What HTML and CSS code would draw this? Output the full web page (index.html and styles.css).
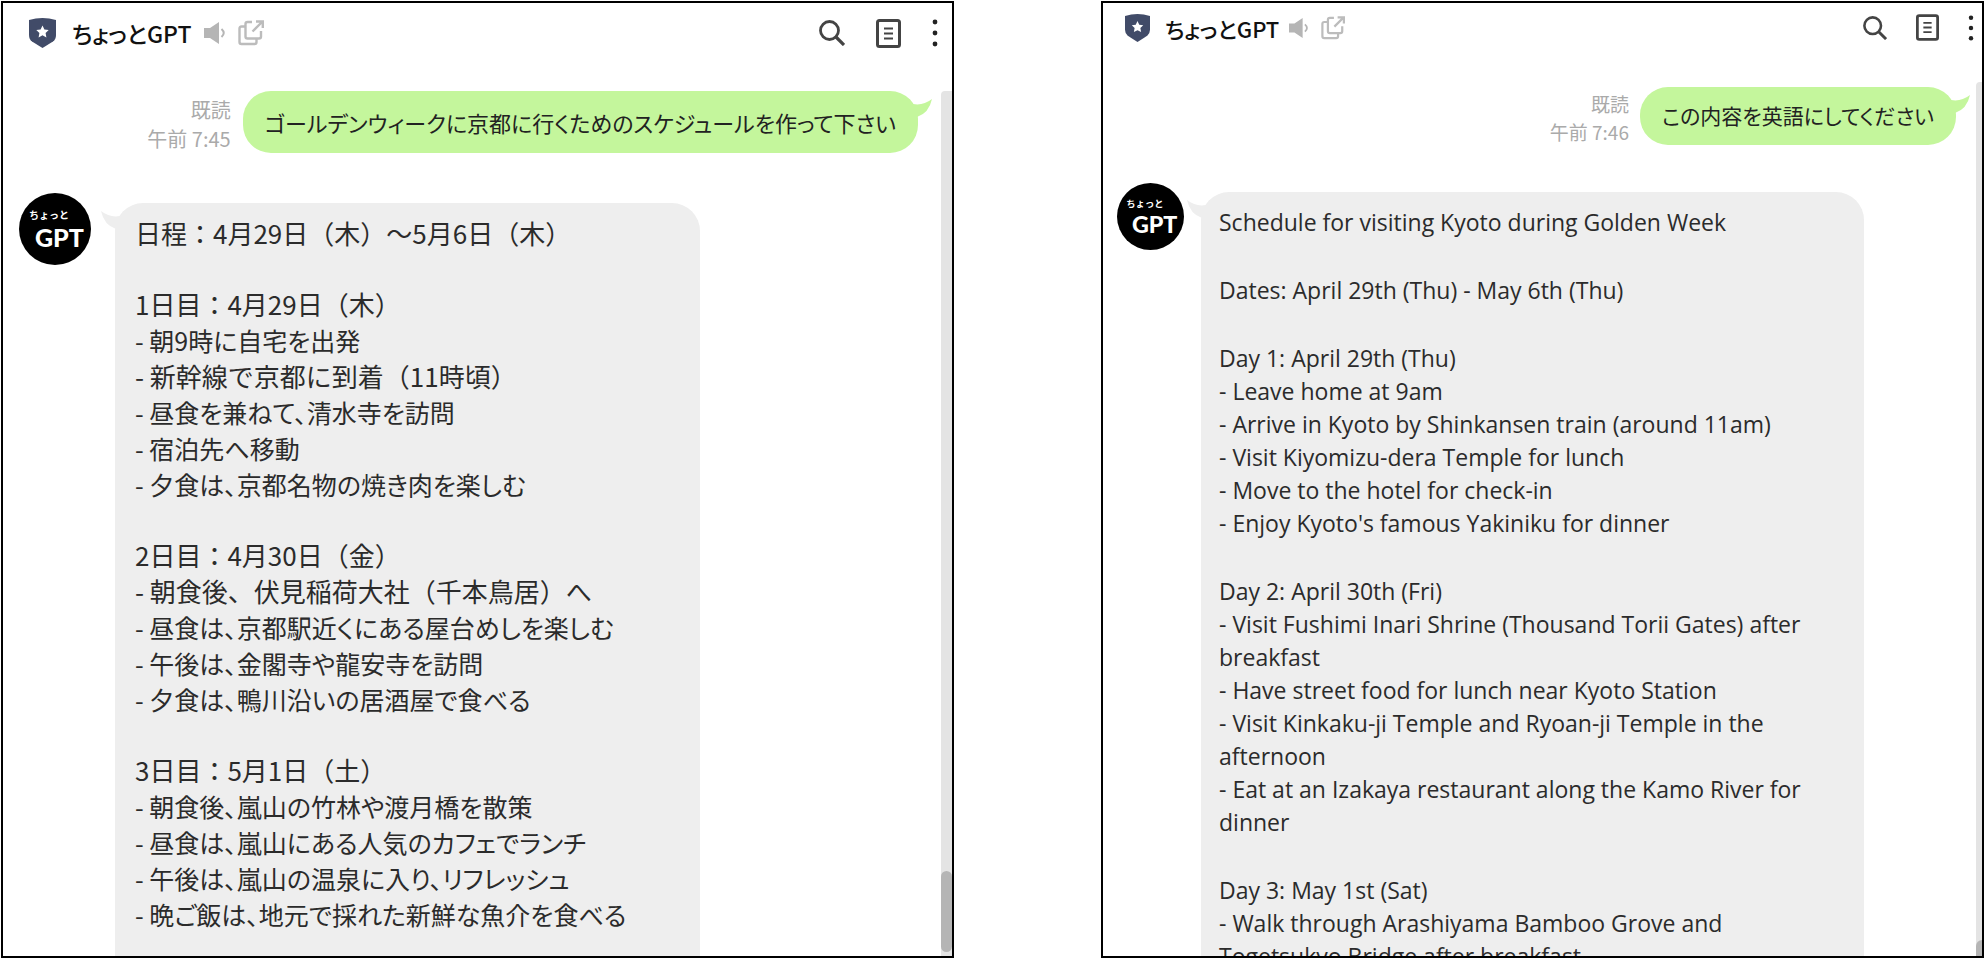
FILE: index.html
```
<!DOCTYPE html>
<html lang="ja">
<head>
  <meta charset="UTF-8">
  <title>ちょっとGPT</title>
  <meta name="viewport" content="width=device-width, initial-scale=1.0">
  <link rel="stylesheet" href="styles.css">
</head>
<body>

  <!-- shared icons -->
  <svg class="sprite" aria-hidden="true">
    <symbol id="shield" viewBox="0 0 27 30">
      <path fill="#414b68" d="M0 2Q13.500-2 27 2V17Q27 21 24 23.500L13.500 30L3 23.500Q0 21 0 17Z"/>
      <path fill="#fff" d="M13.500 7.500l1.900 4 4.300.6-3.100 3 .8 4.300-3.900-2.100-3.900 2.100.8-4.300-3.100-3 4.300-.6z"/>
    </symbol>
    <symbol id="speaker" viewBox="0 0 22 22">
      <path fill="#b5b5b5" d="M0 6H6L15 0V22L6 16H0Z"/>
      <path fill="none" stroke="#b5b5b5" stroke-width="2" d="M17.500 7Q22 11 17.500 15"/>
    </symbol>
    <symbol id="popout" viewBox="0 0 26 26">
      <g fill="none" stroke="#bcbcbc" stroke-width="2.400">
        <path d="M14 2H9.500Q7.500 2 7.500 4V16.500Q7.500 18.500 9.500 18.500H21Q23 18.500 23 16.500V11"/>
        <path d="M7 6.500H3.500Q1.500 6.500 1.500 8.500V22Q1.500 24 3.500 24H16.500Q18.500 24 18.500 22V19"/>
        <path d="M14.500 11.500L24 2M18 1.500H24.800V8"/>
      </g>
    </symbol>
    <symbol id="search" viewBox="0 0 26 26">
      <circle cx="10.500" cy="10.500" r="9" fill="none" stroke="#444" stroke-width="2.800"/>
      <path stroke="#444" stroke-width="3.200" d="M17 17L25 25"/>
    </symbol>
    <symbol id="note" viewBox="0 0 25 29">
      <rect x="1.500" y="1.500" width="22" height="26" rx="2" fill="none" stroke="#444" stroke-width="3"/>
      <path stroke="#444" stroke-width="2" d="M8 9.500H17M8 14.500H17M8 19.500H17"/>
    </symbol>
    <symbol id="dots" viewBox="0 0 6 28">
      <g fill="#222"><circle cx="3" cy="3" r="2.400"/><circle cx="3" cy="14" r="2.400"/><circle cx="3" cy="25" r="2.400"/></g>
    </symbol>
    <symbol id="tail" viewBox="0 0 24 20">
      <path fill="currentColor" d="M0 0L4 5Q14 7 23 0Q20 14 8 18L0 20Z"/>
    </symbol>
  </svg>

  <main class="screens">

    <section class="window">
      <header class="topbar">
        <svg class="shield"><use href="#shield"/></svg>
        <h1 class="title">ちょっとGPT</h1>
        <button class="btn" aria-label="通知"><svg class="speaker"><use href="#speaker"/></svg></button>
        <button class="btn" aria-label="別ウィンドウ"><svg class="popout"><use href="#popout"/></svg></button>
        <div class="tools">
          <button class="btn" aria-label="検索"><svg class="search"><use href="#search"/></svg></button>
          <button class="btn" aria-label="ノート"><svg class="note"><use href="#note"/></svg></button>
          <button class="btn" aria-label="メニュー"><svg class="dots"><use href="#dots"/></svg></button>
        </div>
      </header>
      <div class="chat">
        <div class="messages">
          <div class="row sent">
            <div class="meta">既読<br>午前 7:45</div>
            <div class="bubble green">
              <p class="kana">ゴールデンウィークに京都に行くためのスケジュールを作って下さい</p>
              <svg class="tail"><use href="#tail"/></svg>
            </div>
          </div>
          <div class="row received">
            <svg class="avatar" viewBox="0 0 72 72">
              <circle cx="36" cy="36" r="36"/>
              <text class="avatar-small" x="10" y="26">ちょっと</text>
              <text class="avatar-big" x="16" y="54">GPT</text>
            </svg>
            <div class="bubble gray">
              <svg class="tail"><use href="#tail"/></svg>
              <div class="block">
                <p>日程：4月29日（木）～5月6日（木）</p>
              </div>
              <div class="block">
                <p>1日目：4月29日（木）</p>
                <p class="kana">- 朝9時に自宅を出発</p>
                <p>- 新幹線で京都に到着（11時頃）</p>
                <p class="kana">- 昼食を兼ねて、清水寺を訪問</p>
                <p class="kana">- 宿泊先へ移動</p>
                <p class="kana">- 夕食は、京都名物の焼き肉を楽しむ</p>
              </div>
              <div class="block">
                <p>2日目：4月30日（金）</p>
                <p>- 朝食後、伏見稲荷大社（千本鳥居）へ</p>
                <p class="kana">- 昼食は、京都駅近くにある屋台めしを楽しむ</p>
                <p class="kana">- 午後は、金閣寺や龍安寺を訪問</p>
                <p class="kana">- 夕食は、鴨川沿いの居酒屋で食べる</p>
              </div>
              <div class="block">
                <p>3日目：5月1日（土）</p>
                <p class="kana">- 朝食後、嵐山の竹林や渡月橋を散策</p>
                <p class="kana">- 昼食は、嵐山にある人気のカフェでランチ</p>
                <p class="kana">- 午後は、嵐山の温泉に入り、リフレッシュ</p>
                <p class="kana">- 晩ご飯は、地元で採れた新鮮な魚介を食べる</p>
              </div>
            </div>
          </div>
        </div>
        <div class="scrollbar"><div class="thumb"></div></div>
      </div>
    </section>

    <section class="window small">
      <header class="topbar">
        <svg class="shield"><use href="#shield"/></svg>
        <h1 class="title">ちょっとGPT</h1>
        <button class="btn" aria-label="通知"><svg class="speaker"><use href="#speaker"/></svg></button>
        <button class="btn" aria-label="別ウィンドウ"><svg class="popout"><use href="#popout"/></svg></button>
        <div class="tools">
          <button class="btn" aria-label="検索"><svg class="search"><use href="#search"/></svg></button>
          <button class="btn" aria-label="ノート"><svg class="note"><use href="#note"/></svg></button>
          <button class="btn" aria-label="メニュー"><svg class="dots"><use href="#dots"/></svg></button>
        </div>
      </header>
      <div class="chat">
        <div class="messages">
          <div class="row sent">
            <div class="meta">既読<br>午前 7:46</div>
            <div class="bubble green">
              <p class="kana">この内容を英語にしてください</p>
              <svg class="tail"><use href="#tail"/></svg>
            </div>
          </div>
          <div class="row received">
            <svg class="avatar" viewBox="0 0 72 72">
              <circle cx="36" cy="36" r="36"/>
              <text class="avatar-small" x="10" y="26">ちょっと</text>
              <text class="avatar-big" x="16" y="54">GPT</text>
            </svg>
            <div class="bubble gray" lang="en">
              <svg class="tail"><use href="#tail"/></svg>
              <div class="block">
                <p>Schedule for visiting Kyoto during Golden Week</p>
              </div>
              <div class="block">
                <p>Dates: April 29th (Thu) - May 6th (Thu)</p>
              </div>
              <div class="block">
                <p>Day 1: April 29th (Thu)</p>
                <p>- Leave home at 9am</p>
                <p>- Arrive in Kyoto by Shinkansen train (around 11am)</p>
                <p>- Visit Kiyomizu-dera Temple for lunch</p>
                <p>- Move to the hotel for check-in</p>
                <p>- Enjoy Kyoto's famous Yakiniku for dinner</p>
              </div>
              <div class="block">
                <p>Day 2: April 30th (Fri)</p>
                <p>- Visit Fushimi Inari Shrine (Thousand Torii Gates) after breakfast</p>
                <p>- Have street food for lunch near Kyoto Station</p>
                <p>- Visit Kinkaku-ji Temple and Ryoan-ji Temple in the afternoon</p>
                <p>- Eat at an Izakaya restaurant along the Kamo River for dinner</p>
              </div>
              <div class="block">
                <p>Day 3: May 1st (Sat)</p>
                <p>- Walk through Arashiyama Bamboo Grove and Togetsukyo Bridge after breakfast</p>
              </div>
            </div>
          </div>
        </div>
        <div class="scrollbar"><div class="thumb"></div></div>
      </div>
    </section>

  </main>

</body>
</html>
```
FILE: styles.css
```
* {
  box-sizing: border-box;
}

body {
  margin: 0;
  background: #fff;
  color: #2b2b2b;
  font-family: "Noto Sans CJK JP", sans-serif;
}

h1, p {
  margin: 0;
}

.sprite {
  position: absolute;
  width: 0;
  height: 0;
}

.screens {
  display: grid;
  grid-template-columns: 953fr 883fr;
  gap: 147px;
  height: 100vh;
  padding: 1px 1px 2px;
}

.window {
  --text: 26px;
  --line: 36px;
  --sent: 22px;
  --meta: 20px;
  --meta-line: 29px;
  --avatar: 72px;
  display: flex;
  flex-direction: column;
  min-width: 0;
  min-height: 0;
  border: 2px solid #000;
  overflow: hidden;
}

.small {
  --text: 23px;
  --line: 33px;
  --sent: 21px;
  --meta: 19px;
  --meta-line: 28px;
  --avatar: 67px;
}

/* top bar */

.topbar {
  display: flex;
  align-items: center;
  flex-shrink: 0;
  height: 88px;
  padding: 0 14px 28px 26px;
}

.title {
  margin: 0 12px 0 16px;
  font-size: 23px;
  font-weight: 500;
  line-height: 34px;
  color: #111;
  font-feature-settings: "palt";
}

.btn {
  display: flex;
  padding: 0;
  border: 0;
  background: none;
  cursor: pointer;
}

.shield { width: 27px; height: 30px; }
.speaker { width: 22px; height: 22px; margin-right: 12px; }
.popout { width: 26px; height: 26px; }
.search { width: 26px; height: 26px; }
.note { width: 25px; height: 29px; }
.dots { width: 6px; height: 28px; }

.tools {
  display: flex;
  align-items: center;
  gap: 31px;
  margin-left: auto;
}

.small .topbar {
  height: 79px;
  padding: 0 8px 30px 22px;
}

.small .title {
  margin: 0 10px 0 15px;
  font-size: 22px;
}

.small .shield { width: 25px; height: 28px; }
.small .speaker { width: 20px; height: 20px; }
.small .popout { width: 24px; height: 24px; }
.small .search { width: 24px; height: 24px; }
.small .note { width: 23px; height: 27px; }
.small .dots { height: 26px; }
.small .tools { gap: 29px; }

/* chat */

.chat {
  display: flex;
  flex: 1;
  min-height: 0;
}

.messages {
  flex: 1;
  min-width: 0;
  padding: 0 23px 0 16px;
}

.small .messages {
  padding: 5px 20px 0 14px;
}

.row {
  display: flex;
  align-items: flex-start;
}

.sent {
  justify-content: flex-end;
  gap: 12px;
  margin-bottom: 40px;
}

.small .sent {
  gap: 11px;
  margin-bottom: 37px;
}

.meta {
  padding-top: 4px;
  font-size: var(--meta);
  line-height: var(--meta-line);
  color: #aaa;
  text-align: right;
  white-space: nowrap;
}

.small .meta {
  padding-top: 3px;
}

.avatar {
  flex-shrink: 0;
  width: var(--avatar);
  height: var(--avatar);
}

.avatar-small {
  fill: #fff;
  font-size: 10px;
  font-weight: 700;
}

.avatar-big {
  fill: #fff;
  font-family: "Liberation Sans Narrow", Lato, sans-serif;
  font-size: 25px;
  font-weight: 900;
}

.bubble {
  position: relative;
  border-radius: 28px;
  font-size: var(--text);
  line-height: var(--line);
}

.green {
  padding: 13px 22px;
  background: #c4f69c;
  color: #222;
  font-size: var(--sent);
}

.small .green {
  padding: 12px 22px 13px;
}

.gray {
  margin: 10px 0 0 24px;
  padding: 12px 20px 60px;
  width: 585px;
  background: #eee;
}

.small .gray {
  margin: 9px 0 0 17px;
  padding: 14px 18px 60px;
  width: 663px;
  font-family: "Open Sans", sans-serif;
}

.kana {
  font-feature-settings: "palt";
}

.gray .kana {
  font-size: 25px;
}

.block + .block {
  margin-top: 35px;
}

.tail {
  position: absolute;
  top: 8px;
  right: -15px;
  width: 24px;
  height: 20px;
  color: #c4f69c;
}

.gray .tail {
  right: auto;
  left: -15px;
  color: #eee;
  transform: scaleX(-1);
}

/* scrollbar */

.scrollbar {
  display: flex;
  flex-direction: column;
  justify-content: flex-end;
  width: 11px;
  padding-bottom: 4px;
  background: #e4e4e4;
  border-top-left-radius: 4px;
}

.thumb {
  height: 81px;
  border-radius: 6px;
  background: #b5b5b5;
}

.small .scrollbar {
  width: 6px;
  padding-bottom: 0;
}

.small .thumb {
  height: 16px;
  border-radius: 6px 0 0 0;
}
```
